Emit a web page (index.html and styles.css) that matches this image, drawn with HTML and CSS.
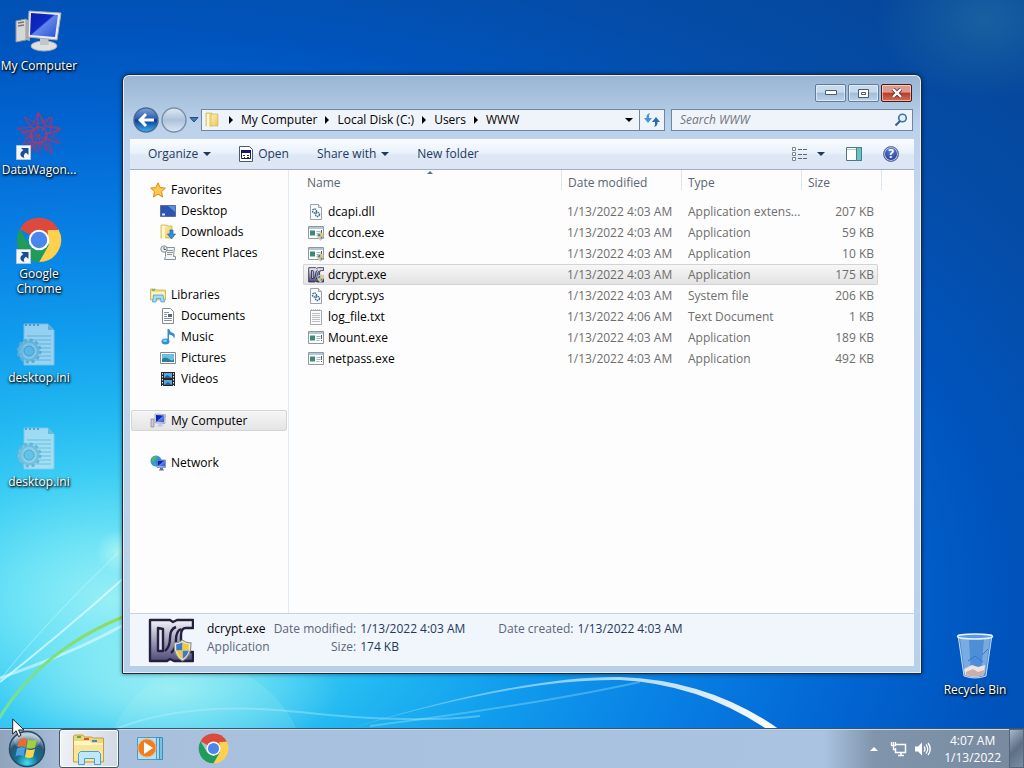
FILE: index.html
```html
<!DOCTYPE html>
<html lang="en">
<head>
    <meta charset="UTF-8">
    <meta name="viewport" content="width=device-width, initial-scale=1.0">
    <title>WWW</title>
    <link rel="stylesheet" href="styles.css">
</head>
<body>
    <!-- Shared icons -->
    <svg class="sprite" aria-hidden="true">
        <defs>
            <linearGradient id="screen" x1="0" y1="0" x2="1" y2="1">
                <stop offset="0" stop-color="#0a1fa8"/>
                <stop offset=".45" stop-color="#1028c4"/>
                <stop offset=".5" stop-color="#5f86ea"/>
                <stop offset="1" stop-color="#2a50d8"/>
            </linearGradient>
            <linearGradient id="dcFill" x1="0" y1="0" x2="0" y2="1">
                <stop offset="0" stop-color="#f4f4fa"/>
                <stop offset="1" stop-color="#4d4a78"/>
            </linearGradient>
            <linearGradient id="folderFill" x1="0" y1="0" x2="1" y2="1">
                <stop offset="0" stop-color="#fdf3b4"/>
                <stop offset="1" stop-color="#e8c55e"/>
            </linearGradient>
            <radialGradient id="orb" cx=".5" cy=".9" r=".8">
                <stop offset="0" stop-color="#3fe0f5"/>
                <stop offset=".4" stop-color="#12708f"/>
                <stop offset=".75" stop-color="#2a5674"/>
                <stop offset="1" stop-color="#a9c0d2"/>
            </radialGradient>
            <linearGradient id="back" x1="0" y1="0" x2="0" y2="1">
                <stop offset="0" stop-color="#7fa3d8"/>
                <stop offset=".45" stop-color="#2a5cb0"/>
                <stop offset=".5" stop-color="#0c3a93"/>
                <stop offset="1" stop-color="#38b4f0"/>
            </linearGradient>
            <linearGradient id="fwd" x1="0" y1="0" x2="0" y2="1">
                <stop offset="0" stop-color="#dfe9f5"/>
                <stop offset=".5" stop-color="#adc2da"/>
                <stop offset="1" stop-color="#dbe8f6"/>
            </linearGradient>
        </defs>
        <symbol id="i-chrome" viewBox="0 0 48 48">
            <path fill="#dc4a3d" d="M24 24 4 12.600A23 23 0 0 1 44 12.500Z"/>
            <path fill="#fdd04d" d="M44 12.500A23 23 0 0 1 24 47L34 29.500 33 13.500Z"/>
            <path fill="#1f9d58" d="M4 12.600 14 30 24 35.500 34 29.500 24 47A23 23 0 0 1 4 12.600Z"/>
            <path fill="#dc4a3d" d="M24 13.500H44.400L40 8Z"/>
            <circle cx="24" cy="24" r="10.800" fill="#fff"/>
            <circle cx="24" cy="24" r="8.600" fill="#4a86ec"/>
        </symbol>
        <symbol id="i-shortcut" viewBox="0 0 15 15">
            <path fill="#f4f7fa" stroke="#b8c4cf" d="M.5.5h14v14H.5z"/>
            <path fill="#1b4f94" d="M5 3h7.500v7L10 7.700C7.800 9 7.300 11 8.500 13 3.500 12 3 7.700 7.300 5.300Z"/>
        </symbol>
        <symbol id="i-ini" viewBox="0 0 48 48">
            <g opacity=".65">
                <path fill="#dcedf5" stroke="#a8cfe2" d="M9 4h24l6 6v35H9z"/>
                <path stroke="#8fbcd4" d="M12 16h24M12 20h24M12 24h24M12 28h24M12 32h24M12 36h24M12 40h24"/>
                <path fill="#8ab9cf" d="M33 4v6h6z"/>
                <path stroke="#6c9ab4" stroke-width="2" stroke-dasharray="2 2" d="M10 5h16"/>
                <circle cx="14" cy="31" r="11" fill="#b5d3e2" fill-opacity=".85" stroke="#7fb0c9" stroke-width="3" stroke-dasharray="3 2.800"/>
                <circle cx="14" cy="31" r="9" fill="none" stroke="#90bdd3" stroke-width="2"/>
                <circle cx="14" cy="31" r="5" fill="#7cc4e3" stroke="#5b9cbf"/>
            </g>
        </symbol>
        <symbol id="i-dc" viewBox="0 0 46 46">
            <path fill="url(#dcFill)" stroke="#24213f" stroke-width="2.400" stroke-linejoin="round" d="M2 2h20l3 2 4-2h16v8H38q-5 0-5 7v17h12v9H26l-4-2-3 2H2V2z"/>
            <path fill="#e3e3f0" stroke="#24213f" stroke-width="2.400" stroke-linejoin="round" d="m10 10 5 1v22h-5z"/>
            <path fill="none" stroke="#24213f" stroke-width="2.400" d="M28 9q-6 2-6 11t-5 13M33 11q-5 2-5 11t-5 13"/>
        </symbol>
        <symbol id="i-shield" viewBox="0 0 18 22">
            <path fill="#e9e6dc" stroke="#8a8a80" d="M9 1q4 3 8 2.500Q18 16 9 21 0 16 1 3.500 5 4 9 1z"/>
            <path fill="#3a79d0" d="M9 3q-3 2-6 2v6h6zM9 11h6q-1 5-6 8z"/>
            <path fill="#f2ca3c" d="M9 3q3 2 6 2v6H9zM9 11H3q1 5 6 8z"/>
        </symbol>
        <symbol id="i-exe" viewBox="0 0 16 16">
            <path fill="#fff" stroke="#8b99a5" d="M.5 1.500h15v12H.5z"/>
            <path fill="#b5c6d6" d="M1 2h14v2H1z"/>
            <path fill="#3b8a72" d="M2 5.500h5v5H2z"/>
            <path stroke="#a9b3bd" d="M8.500 6.500h4M8.500 8.500h4M8.500 10.500h3"/>
            <path stroke="#55606b" d="M13.500 5v4M13.500 10v1"/>
        </symbol>
        <symbol id="i-gears" viewBox="0 0 16 16">
            <path fill="#fbfcfd" stroke="#9aa3ab" d="M2.500.5h8l3 3v12h-11z"/>
            <path fill="#dde3e8" stroke="#9aa3ab" d="M10.500.5v3h3"/>
            <circle cx="6.500" cy="7" r="2" fill="none" stroke="#3d6c98" stroke-width="1.500" stroke-dasharray="1.500 .6"/>
            <circle cx="9.500" cy="10.500" r="2" fill="none" stroke="#3d6c98" stroke-width="1.500" stroke-dasharray="1.500 .6"/>
        </symbol>
        <symbol id="i-text" viewBox="0 0 16 16">
            <path fill="#fbfbfb" stroke="#a5a9ab" d="M2.500 1.500h11v14h-11z"/>
            <path stroke="#8d9396" stroke-dasharray="1 1" d="M3 1h10"/>
            <path stroke="#b9bfc3" d="M4 4.500h8M4 6.500h8M4 8.500h8M4 10.500h8M4 12.500h8"/>
        </symbol>
        <symbol id="i-pc" viewBox="0 0 16 16">
            <path fill="#c9ccd2" stroke="#858a93" stroke-width=".7" d="M1 6h3v8H1z"/>
            <path fill="#dfe2e8" stroke="#9096a3" stroke-width=".7" d="m5 1 10.500.7-.8 9L5 9.800z"/>
            <path fill="url(#screen)" d="m6 2 8.500.5-.6 7L6 8.800z"/>
            <path fill="#c7cad4" d="M9 10.500h3l1 3H7z"/>
        </symbol>
        <symbol id="i-library" viewBox="0 0 16 16">
            <path fill="#f2dc86" stroke="#c9a440" stroke-width=".7" d="M.5 2h5l1 1h9v10H.5z"/>
            <path fill="#fff4bd" d="M1.500 5h13v7h-13z"/>
            <path stroke="#50b860" stroke-width="1.500" d="M2 3h3"/>
            <path fill="#9fdcf5" stroke="#3b94c8" stroke-width=".7" d="M3.500 8h9.500l1.500 7H11l-.5-3.500H6.500L6 15H2.500z"/>
        </symbol>
    </svg>

    <main class="desktop">
        <svg class="wallpaper" viewBox="0 0 1024 768" preserveAspectRatio="none" aria-hidden="true">
            <defs>
                <linearGradient id="swoosh">
                    <stop offset="0" stop-color="#fff" stop-opacity=".15"/>
                    <stop offset=".45" stop-color="#fff" stop-opacity=".5"/>
                    <stop offset="1" stop-color="#fff"/>
                </linearGradient>
                <linearGradient id="stem">
                    <stop offset="0" stop-color="#6fe39a"/>
                    <stop offset="1" stop-color="#8fdc5a"/>
                </linearGradient>
                <radialGradient id="glow">
                    <stop offset="0" stop-color="#c4fbf3" stop-opacity=".6"/>
                    <stop offset="1" stop-color="#c4fbf3" stop-opacity="0"/>
                </radialGradient>
                <radialGradient id="haze">
                    <stop offset="0" stop-color="#2f7fa6" stop-opacity=".45"/>
                    <stop offset="1" stop-color="#2f7fa6" stop-opacity="0"/>
                </radialGradient>
            </defs>
            <ellipse cx="985" cy="20" rx="110" ry="80" fill="url(#haze)"/>
            <ellipse cx="170" cy="690" rx="170" ry="70" fill="url(#glow)"/>
            <ellipse cx="205" cy="790" rx="105" ry="125" fill="#b8fbf0" opacity=".14"/>
            <circle cx="118" cy="552" r="22" fill="url(#glow)"/>
            <path fill="none" stroke="#dffcff" stroke-width="2" opacity=".75" d="M0 682Q60 635 125 577"/>
            <path fill="none" stroke="#dffcff" stroke-width="1" opacity=".45" d="M0 680Q40 628 118 553"/>
            <path fill="none" stroke="#dffcff" stroke-width="3" opacity=".6" d="M0 678Q80 650 125 624"/>
            <path fill="none" stroke="url(#stem)" stroke-width="3" d="M-2 720Q40 650 125 616"/>
            <path fill="none" stroke="#bdf3ff" stroke-width="2" opacity=".35" d="M118 728Q190 700 300 712T480 716"/>
            <path fill="none" stroke="#bdf3ff" stroke-width="2" opacity=".3" d="M370 726Q540 704 640 682"/>
            <path fill="url(#swoosh)" d="M345 730Q520 676 620 677Q710 680 780 730H768Q700 684 620 680Q520 678 345 730z"/>
        </svg>

        <nav class="shortcuts" aria-label="Desktop icons">
            <a class="shortcut" href="#">
                <span class="shortcut-icon">
                    <svg width="48" height="48" viewBox="0 0 48 48">
                        <path fill="#d7d8d6" stroke="#94989c" d="m1 13 10-2v21l-10 2z"/>
                        <path fill="#a6a9ab" d="m11 11 4 2v20l-4-1z"/>
                        <path stroke="#70757b" stroke-width="1.500" d="m3 15 6-1M3 18l6-1"/>
                        <ellipse cx="29" cy="38" rx="13" ry="5" fill="#dfe1e0" stroke="#a6abae"/>
                        <path fill="#c3c7ca" d="M25 29h8l1 8h-9z"/>
                        <path fill="#e8ebee" stroke="#a4abb3" d="m14 3 32 2-4 27-29-3z"/>
                        <path fill="url(#screen)" d="m16 5 27 2-3 22-25-2z"/>
                    </svg>
                </span>
                <span>My Computer</span>
            </a>
            <a class="shortcut" href="#">
                <span class="shortcut-icon">
                    <svg width="48" height="48" viewBox="0 0 48 48">
                        <g fill="none" stroke="#a8356c" stroke-width=".9" transform="translate(24 23)">
                            <g id="burst">
                                <path d="M0-22 8-8 22-6 6 0 8 16 0 8-8 16-6 0-22-6-8-8z"/>
                                <path d="M-14-16 14 16M14-16-14 16" stroke-dasharray="7 3"/>
                            </g>
                            <use href="#burst" transform="rotate(36)"/>
                            <use href="#burst" transform="rotate(72)"/>
                            <circle r="8" stroke="#d6304a"/>
                        </g>
                    </svg>
                    <svg class="arrow-badge" width="15" height="15"><use href="#i-shortcut"/></svg>
                </span>
                <span>DataWagon...</span>
            </a>
            <a class="shortcut" href="#">
                <span class="shortcut-icon">
                    <svg width="46" height="46"><use href="#i-chrome"/></svg>
                    <svg class="arrow-badge" width="15" height="15"><use href="#i-shortcut"/></svg>
                </span>
                <span>Google Chrome</span>
            </a>
            <a class="shortcut" href="#">
                <span class="shortcut-icon"><svg width="48" height="48"><use href="#i-ini"/></svg></span>
                <span>desktop.ini</span>
            </a>
            <a class="shortcut" href="#">
                <span class="shortcut-icon"><svg width="48" height="48"><use href="#i-ini"/></svg></span>
                <span>desktop.ini</span>
            </a>
        </nav>

        <a class="shortcut recycle-bin" href="#">
            <span class="shortcut-icon">
                <svg width="48" height="48" viewBox="0 0 48 48">
                    <path fill="#9cc6ee" fill-opacity=".5" stroke="#c3ddf3" d="M7 3h34l-6 41q-11 4-22 0z"/>
                    <path fill="#fff" opacity=".25" d="m9 6 9 1 2 36-6-1zM33 7h6l-5 34-4 1z"/>
                    <path fill="none" stroke="#2f78cc" d="m17 29 7-5 8 6M31 23l6-6"/>
                    <path fill="#efe2df" d="m13 37 8-4 6 2 7-2-1 10q-10 4-19 0z"/>
                    <path fill="#c8b0ad" d="m15 40 7-3 5 3 6-2v5q-9 3-18 0z"/>
                    <ellipse cx="24" cy="4.500" rx="17.500" ry="2.500" fill="#5f9bdc" stroke="#e5f1fb" stroke-width="1.500"/>
                </svg>
            </span>
            <span>Recycle Bin</span>
        </a>

        <section class="window">
            <header class="titlebar">
                <button class="caption" aria-label="Minimize">
                    <svg width="12" height="6"><path fill="#fff" stroke="#4c5a6b" d="M.5.500h11v4H.5z"/></svg>
                </button>
                <button class="caption" aria-label="Restore">
                    <svg width="11" height="9"><path fill="#fff" stroke="#4c5a6b" d="M.5.500h10v8H.5zM3.500 3.500h4v2h-4z"/></svg>
                </button>
                <button class="caption caption-close" aria-label="Close">
                    <svg width="12" height="10" viewBox="0 0 12 10"><path stroke="#6a3330" stroke-width="4" d="m2 1 8 8M10 1 2 9"/><path stroke="#fff" stroke-width="2.400" d="m2 1 8 8M10 1 2 9"/></svg>
                </button>
            </header>

            <div class="navbar">
                <div class="travel">
                    <button aria-label="Back">
                        <svg width="26" height="26" viewBox="0 0 26 26">
                            <circle cx="13" cy="13" r="12" fill="url(#back)" stroke="#4c6a94" stroke-width="1.500"/>
                            <path fill="#fff" d="M5 13l7-7 2 2-3 3.400h10v3.200H11l3 3.400-2 2z"/>
                        </svg>
                    </button>
                    <button aria-label="Forward">
                        <svg width="26" height="26" viewBox="0 0 26 26">
                            <circle cx="13" cy="13" r="12" fill="url(#fwd)" stroke="#7c91aa" stroke-width="1.500"/>
                        </svg>
                    </button>
                    <button aria-label="Recent pages">
                        <svg width="10" height="6"><path fill="#3f7cb3" stroke="#274e7c" d="M1 .5h8L5 5z"/></svg>
                    </button>
                </div>
                <div class="address">
                    <svg class="address-icon" width="16" height="16" viewBox="0 0 16 16">
                        <path fill="#f6dc7e" stroke="#d1ad49" stroke-width=".6" d="M2 1h6v13H2z"/>
                        <path fill="url(#folderFill)" stroke="#d1ad49" stroke-width=".6" d="m7 3 2-1h5v12H7z"/>
                        <path fill="#fffbe0" d="M3 2h2v13H3z"/>
                    </svg>
                    <span class="sep"></span>
                    <button>My Computer</button>
                    <span class="sep"></span>
                    <button>Local Disk (C:)</button>
                    <span class="sep"></span>
                    <button>Users</button>
                    <span class="sep"></span>
                    <button>WWW</button>
                    <button class="history" aria-label="Previous locations"><span class="down"></span></button>
                    <button class="refresh" aria-label="Refresh">
                        <svg width="16" height="14" viewBox="0 0 16 14">
                            <path fill="#4b94d2" d="M6 0Q2 1 2.500 5H0l4 5 4-5H5Q4.500 2 6 0z"/>
                            <path fill="#2f6cae" d="M10 14q4-1 3.500-5H16l-4-5-4 5h3q.5 3-1 5z"/>
                        </svg>
                    </button>
                </div>
                <form class="search">
                    <input type="text" placeholder="Search WWW" aria-label="Search WWW">
                    <svg width="14" height="14" viewBox="0 0 14 14">
                        <circle cx="8.500" cy="5" r="3.800" fill="#e4f0fb" stroke="#3f6fae" stroke-width="1.600"/>
                        <path stroke="#3a5f96" stroke-width="2.200" d="M6 8 1.500 12.500"/>
                    </svg>
                </form>
            </div>

            <div class="toolbar">
                <button>Organize <span class="down"></span></button>
                <button>
                    <svg width="14" height="16" viewBox="0 0 14 16">
                        <path fill="#fff" stroke="#4d5a68" d="M.5.500h10l3 3v12H.5z"/>
                        <path fill="#fff" stroke="#1a1a50" d="M2.500 4.500h9v8h-9z"/>
                        <path fill="#16166c" d="M2 4h10v3H2z"/>
                        <path stroke="#333" d="M4 9.500h2M8 9.500h2M5 11.500h1M8 11.500h2"/>
                    </svg>
                    Open
                </button>
                <button>Share with <span class="down"></span></button>
                <button>New folder</button>
                <div class="toolbar-right">
                    <button aria-label="Change your view">
                        <svg width="16" height="14" viewBox="0 0 16 14">
                            <path fill="#fff" stroke="#7b8490" d="M.5.500h3v3h-3zM.5 5.500h3v3h-3zM.5 10.500h3v3h-3z"/>
                            <path stroke="#5a6674" stroke-dasharray="4 1" d="M6 2.500h10M6 7.500h10M6 11.500h10"/>
                        </svg>
                        <span class="down"></span>
                    </button>
                    <button aria-label="Preview pane">
                        <svg width="16" height="14" viewBox="0 0 16 14">
                            <path fill="#fff" stroke="#53728a" d="M.5.500h15v13H.5z"/>
                            <path fill="#6fc0c4" stroke="#3a868c" d="M10.500.500h5v13h-5z"/>
                            <path stroke="#b6c4d0" d="M1 2.500h9"/>
                        </svg>
                    </button>
                    <button class="help" aria-label="Help">?</button>
                </div>
            </div>

            <div class="content">
                <nav class="tree" aria-label="Navigation pane">
                    <div class="tree-group">
                        <a href="#">
                            <svg width="16" height="16" viewBox="0 0 16 16"><path fill="#ffc84a" stroke="#d98a1c" d="m8 .8 2.200 4.800 5.200.5-4 3.500 1.300 5.400L8 12.200 3.300 15l1.300-5.400-4-3.500 5.200-.5z"/></svg>
                            Favorites
                        </a>
                        <a class="child" href="#">
                            <svg width="16" height="16" viewBox="0 0 16 16"><path fill="#2a55b4" stroke="#5b6f96" d="M.5 2.500h15v11H.5z"/><path fill="#5b8ee0" d="M8 3h7v6z"/><path stroke="#dfe9fa" stroke-width="2" d="M2 11.500h3"/></svg>
                            Desktop
                        </a>
                        <a class="child" href="#">
                            <svg width="16" height="16" viewBox="0 0 16 16"><path fill="url(#folderFill)" stroke="#cda944" stroke-width=".7" d="M1 1h6l1 1h4v12H1z"/><path fill="#fff7cb" d="M2 2h3v13H2z"/><path fill="#2f93d8" stroke="#1b6aa8" stroke-width=".7" d="M10 6h3v4h2.500l-4 5-4-5H10z"/></svg>
                            Downloads
                        </a>
                        <a class="child" href="#">
                            <svg width="16" height="16" viewBox="0 0 16 16"><path fill="#f2f3f5" stroke="#8b9199" d="M5.500 2.500h9l-1 9h2v3h-11l1-3z"/><path stroke="#8b9199" d="M7 5.500h6M7 7.500h6M7 9.500h5"/><circle cx="4" cy="4" r="3.200" fill="#e7edf2" stroke="#858c95"/><path fill="none" stroke="#5d656e" d="M4 2v2.500h2"/></svg>
                            Recent Places
                        </a>
                    </div>
                    <div class="tree-group">
                        <a href="#"><svg width="16" height="16"><use href="#i-library"/></svg>Libraries</a>
                        <a class="child" href="#">
                            <svg width="16" height="16" viewBox="0 0 16 16"><path fill="#fff" stroke="#858b91" d="M2.500.5h8l3 3v12h-11z"/><path stroke="#8a9198" d="M4 4.500h5M4 6.500h3M4 8.500h3M4 10.500h8M4 12.500h8"/><path fill="#54687c" d="M8 6h4v3H8z"/></svg>
                            Documents
                        </a>
                        <a class="child" href="#">
                            <svg width="16" height="16" viewBox="0 0 16 16"><path fill="#2f8fd2" d="M7.500 0h1.500q1 3 4 4t1 6q0-4-5-4.500V13H7.500z"/><ellipse cx="5.500" cy="12.500" rx="4" ry="3" fill="#2f8fd2"/><ellipse cx="5" cy="11.800" rx="2" ry="1.200" fill="#8dcdf2"/></svg>
                            Music
                        </a>
                        <a class="child" href="#">
                            <svg width="16" height="16" viewBox="0 0 16 16"><path fill="#fff" stroke="#7f8b96" d="M.5 2.500h15v11H.5z"/><path fill="#6ebce8" d="M2 4h12v8H2z"/><path fill="#2d7d8d" d="M2 9q4-3 7 0t5 0v3H2z"/></svg>
                            Pictures
                        </a>
                        <a class="child" href="#">
                            <svg width="16" height="16" viewBox="0 0 16 16"><path fill="#23272c" d="M1 1h14v14H1z"/><path fill="#5aa5dc" d="M4 2h8v5H4zM4 9h8v5H4z"/><path fill="#2a5f8a" d="m4 7 3-3 5 3zM4 14l4-3 4 3z"/><path stroke="#e9edf0" stroke-dasharray="1.500 1.500" d="M2.500 2v13M13.500 2v13"/></svg>
                            Videos
                        </a>
                    </div>
                    <div class="tree-group">
                        <a class="current" href="#"><svg width="16" height="16"><use href="#i-pc"/></svg>My Computer</a>
                    </div>
                    <div class="tree-group">
                        <a href="#">
                            <svg width="16" height="16" viewBox="0 0 16 16"><circle cx="6" cy="6" r="5.500" fill="#2f9bd0"/><path fill="#54b860" d="M2 3q3-3 5-2L5 5 2 7zM4 8l3 1-1 2z"/><path fill="#dfe6f2" stroke="#4a5a94" stroke-width=".6" d="M7 5h8.500v7.500H7z"/><path fill="url(#screen)" d="M7.500 5.500h7.500v6H7.500z"/><path fill="#69738c" d="M10 13h3v1.500h1v1H9v-1h1z"/></svg>
                            Network
                        </a>
                    </div>
                </nav>

                <div class="files">
                    <table>
                        <colgroup>
                            <col class="col-name">
                            <col class="col-date">
                            <col class="col-type">
                            <col class="col-size">
                        </colgroup>
                        <thead>
                            <tr><th class="sorted">Name</th><th>Date modified</th><th>Type</th><th>Size</th></tr>
                        </thead>
                        <tbody>
                            <tr>
                                <td><svg width="16" height="16"><use href="#i-gears"/></svg>dcapi.dll</td>
                                <td>1/13/2022 4:03 AM</td><td>Application extens...</td><td>207 KB</td>
                            </tr>
                            <tr>
                                <td><svg width="16" height="16"><use href="#i-exe"/><use href="#i-shield" x="9" y="7" width="7" height="9"/></svg>dccon.exe</td>
                                <td>1/13/2022 4:03 AM</td><td>Application</td><td>59 KB</td>
                            </tr>
                            <tr>
                                <td><svg width="16" height="16"><use href="#i-exe"/><use href="#i-shield" x="9" y="7" width="7" height="9"/></svg>dcinst.exe</td>
                                <td>1/13/2022 4:03 AM</td><td>Application</td><td>10 KB</td>
                            </tr>
                            <tr class="selected">
                                <td><svg width="16" height="16"><use href="#i-dc" width="16" height="16"/><use href="#i-shield" x="9" y="7" width="7" height="9"/></svg>dcrypt.exe</td>
                                <td>1/13/2022 4:03 AM</td><td>Application</td><td>175 KB</td>
                            </tr>
                            <tr>
                                <td><svg width="16" height="16"><use href="#i-gears"/></svg>dcrypt.sys</td>
                                <td>1/13/2022 4:03 AM</td><td>System file</td><td>206 KB</td>
                            </tr>
                            <tr>
                                <td><svg width="16" height="16"><use href="#i-text"/></svg>log_file.txt</td>
                                <td>1/13/2022 4:06 AM</td><td>Text Document</td><td>1 KB</td>
                            </tr>
                            <tr>
                                <td><svg width="16" height="16"><use href="#i-exe"/></svg>Mount.exe</td>
                                <td>1/13/2022 4:03 AM</td><td>Application</td><td>189 KB</td>
                            </tr>
                            <tr>
                                <td><svg width="16" height="16"><use href="#i-exe"/></svg>netpass.exe</td>
                                <td>1/13/2022 4:03 AM</td><td>Application</td><td>492 KB</td>
                            </tr>
                        </tbody>
                    </table>
                </div>
            </div>

            <footer class="details">
                <svg width="46" height="46" viewBox="0 0 46 46"><use href="#i-dc"/><use href="#i-shield" x="25" y="21" width="19" height="23"/></svg>
                <div class="details-grid">
                    <strong>dcrypt.exe</strong>
                    <span class="label">Date modified:</span>
                    <span>1/13/2022 4:03 AM</span>
                    <span class="label created">Date created:</span>
                    <span>1/13/2022 4:03 AM</span>
                    <span class="kind">Application</span>
                    <span class="label">Size:</span>
                    <span>174 KB</span>
                </div>
            </footer>
        </section>
    </main>

    <footer class="taskbar">
        <button class="start" aria-label="Start">
            <svg width="38" height="38" viewBox="0 0 38 38">
                <circle cx="19" cy="19" r="17.500" fill="url(#orb)" stroke="#274a66" stroke-width="1.500"/>
                <ellipse cx="19" cy="11" rx="13" ry="8" fill="#fff" opacity=".22"/>
                <path fill="#ee6a2c" d="M11 10q4-3 8-1l-1.500 8q-4-2-8 0z"/>
                <path fill="#a4cf3d" d="M20 9.500q4 2 9 0l-2 8q-4 2-8.500 0z"/>
                <path fill="#4aa0e0" d="M9 18.500q4-2 8 0l-1.500 8q-4-2.500-8 0z"/>
                <path fill="#fbd34a" d="M18.500 19q4 2 8.500 0l-2 8q-4 2-8 0z"/>
            </svg>
        </button>
        <button class="task active" aria-label="Windows Explorer">
            <svg width="34" height="32" viewBox="0 0 34 32">
                <path fill="#f0d574" stroke="#c3a142" d="M1.500 4q0-2 2-2h7q1 0 2 2h7l2 1h10v24h-30z"/>
                <path fill="#58ad4e" d="M5 3h4v2H5z"/>
                <path fill="#d35638" d="M12 5h5v2h-5z"/>
                <path fill="#4a86d0" d="M20 7h5v2h-5z"/>
                <path fill="#fff6c5" d="M2 8h16l2 2h11v3H2z"/>
                <path fill="#f9e597" d="M2 12h29v16H2z"/>
                <path fill="#bce8fa" stroke="#4ba0cf" d="M8.500 18.500h18l2 2v11h-6v-6h-10v6h-6v-11z"/>
            </svg>
        </button>
        <button class="task" aria-label="Windows Media Player">
            <svg width="30" height="28" viewBox="0 0 30 28">
                <path fill="#7fc0df" stroke="#3a8fb8" d="M8.500 2.500h18v22h-18z"/>
                <path fill="#a9d8ee" stroke="#3a8fb8" d="M5.500 2.500h18v22h-18z"/>
                <path fill="#b5dff2" stroke="#4a9cc4" d="M1.500 2.500h19v22h-19z"/>
                <circle cx="11" cy="13" r="9" fill="#ef7d22" stroke="#f9b06d"/>
                <path fill="#fff" d="m8 7 9 6-9 6z"/>
            </svg>
        </button>
        <button class="task" aria-label="Google Chrome"><svg width="31" height="31"><use href="#i-chrome"/></svg></button>

        <div class="tray">
            <button aria-label="Show hidden icons"><svg width="8" height="4"><path fill="#fff" d="M0 4 4 0l4 4z"/></svg></button>
            <button aria-label="Network">
                <svg width="17" height="16" viewBox="0 0 17 16">
                    <path fill="none" stroke="#fff" stroke-width="1.500" d="M6 3.500h9.500v8H5.500V7M8 14.500h6M11 12v2"/>
                    <path fill="none" stroke="#fff" stroke-width="1.300" d="M1.500 1v3.500h4V1M3.500 1v7.500h2"/>
                </svg>
            </button>
            <button aria-label="Volume">
                <svg width="16" height="14" viewBox="0 0 16 14">
                    <path fill="#fff" d="M0 4.500h3L7 .5v13L3 9.500H0z"/>
                    <path fill="none" stroke="#fff" stroke-width="1.300" d="M9 4.500q2 2.500 0 5M11 2.500q3.500 4.500 0 9M13 1q4.500 6 0 12"/>
                </svg>
            </button>
            <time class="clock">4:07 AM<br>1/13/2022</time>
        </div>
        <button class="show-desktop" aria-label="Show desktop"></button>
    </footer>

    <svg class="cursor" width="13" height="20" viewBox="0 0 13 20" aria-hidden="true">
        <path fill="#fff" stroke="#222" d="M.7 1v15l3.400-3.200L6.500 18.500l2.500-1-2.400-5.500H12z"/>
    </svg>
</body>
</html>
```

FILE: styles.css
```css
* {
    box-sizing: border-box;
}

body {
    margin: 0;
    height: 100vh;
    display: flex;
    flex-direction: column;
    overflow: hidden;
    font-family: "Open Sans", "Noto Sans", sans-serif;
    font-size: 12px;
    line-height: 18px;
    color: #000;
    background: radial-gradient(ellipse 92% 78% at 11% 78%, #98eff6 0%, #6ee3f6 10%, #3ccdf4 21%, #22b8f1 31%, #109ced 45%, #0880e4 61%, #0265d2 79%, #0054bd 94%, #044da9 110%, #05479c 130%);
}

button {
    display: flex;
    align-items: center;
    gap: 5px;
    padding: 0;
    border: 0;
    background: none;
    font: inherit;
    color: inherit;
    white-space: nowrap;
}

a {
    color: inherit;
    text-decoration: none;
}

svg {
    flex: none;
}

.sprite {
    position: absolute;
    width: 0;
    height: 0;
}

.down {
    border: 4px solid transparent;
    border-top-color: currentColor;
    border-bottom: 0;
}

/* Desktop */
.desktop {
    flex: 1;
    position: relative;
    min-height: 0;
}

.wallpaper {
    position: absolute;
    top: 0;
    left: 0;
    width: 100vw;
    height: 100vh;
}

.shortcuts {
    position: relative;
    width: 78px;
}

.shortcut {
    display: flex;
    flex-direction: column;
    align-items: center;
    gap: 2px;
    width: 78px;
    height: 104px;
    padding-top: 8px;
    color: #fff;
    line-height: 15px;
    text-align: center;
    text-shadow: 1px 1px 2px #000, 0 1px 3px #000;
}

.shortcut-icon {
    position: relative;
    display: flex;
    justify-content: center;
    align-items: center;
    width: 48px;
    height: 48px;
}

.arrow-badge {
    position: absolute;
    left: 1px;
    bottom: 0;
}

.recycle-bin {
    position: absolute;
    right: 10px;
    bottom: 0;
}

.cursor {
    position: absolute;
    left: 12px;
    bottom: 30px;
}

/* Explorer window */
.window {
    position: absolute;
    inset: 74px 102px 54px 122px;
    display: flex;
    flex-direction: column;
    padding: 0 7px 7px;
    border: 1px solid #1c2a3c;
    border-radius: 7px 7px 1px 1px;
    background: linear-gradient(#98b5d3, #bcd2ea 50px, #c3d5ef 120px, #b7d0e8);
    box-shadow: inset 0 0 0 1px #e3eefa, 0 0 4px rgba(0, 0, 0, 0.5);
}

.titlebar {
    display: flex;
    justify-content: flex-end;
    gap: 2px;
    height: 34px;
    padding: 9px 2px 0;
}

.caption {
    justify-content: center;
    width: 31px;
    height: 18px;
    border: 1px solid #5f7d9f;
    border-radius: 2px;
    background: linear-gradient(#c8dbee 45%, #a3bdd8 50%, #b9d3ec);
    box-shadow: inset 0 0 0 1px rgba(255, 255, 255, 0.5);
}

.caption-close {
    border-color: #4e1714;
    background: linear-gradient(#dd9c90 45%, #b93a26 50%, #d2705a);
}

.navbar {
    display: flex;
    gap: 6px;
    height: 30px;
    padding: 0 1px 8px 3px;
}

.travel {
    display: flex;
    align-items: center;
    gap: 2px;
    width: 62px;
}

.address,
.search {
    display: flex;
    align-items: center;
    height: 22px;
    border: 1px solid #6d87a3;
    background: #eff4fb;
}

.address {
    flex: 1;
}

.address-icon {
    margin: 0 9px 0 2px;
}

.sep {
    margin: 0 8px 0 0;
    border: 4px solid transparent;
    border-left-color: #000;
    border-right: 0;
}

.sep ~ .sep {
    margin-left: 8px;
}

.history {
    margin: 0 6px 0 auto;
}

.refresh {
    justify-content: center;
    width: 25px;
    height: 20px;
    border-left: 1px solid #6d87a3;
}

.search {
    width: 242px;
    padding: 0 4px 0 8px;
}

.search input {
    flex: 1;
    min-width: 0;
    padding: 0;
    border: 0;
    outline: 0;
    background: none;
    font: inherit;
}

.search input::placeholder {
    color: #6f757c;
    font-style: italic;
}

.toolbar {
    display: flex;
    align-items: center;
    gap: 28px;
    height: 31px;
    padding: 0 15px 0 18px;
    border-bottom: 1px solid #a0afc3;
    background: linear-gradient(#fafdff, #e9f1fb 45%, #dde7f5 55%, #dce6f4);
    color: #1e395b;
}

.toolbar-right {
    display: flex;
    align-items: center;
    gap: 21px;
    margin-left: auto;
}

.toolbar-right button:first-child {
    gap: 9px;
}

.help {
    justify-content: center;
    width: 16px;
    height: 16px;
    border: 1px solid #5d6f9c;
    border-radius: 50%;
    background: radial-gradient(circle at 50% 30%, #5c7fd6, #152c8a);
    box-shadow: inset 0 0 0 1px #b9c6e4;
    color: #fff;
    font-weight: 700;
}

.content {
    flex: 1;
    display: flex;
    min-height: 0;
    background: #fdfdfd;
}

.tree {
    display: flex;
    flex-direction: column;
    gap: 21px;
    width: 159px;
    padding: 9px 1px 0;
    border-right: 1px solid #e1e9f3;
}

.tree a {
    display: flex;
    align-items: center;
    gap: 5px;
    height: 21px;
    padding-left: 19px;
}

.tree a.child {
    padding-left: 29px;
}

.tree a.current {
    padding-left: 18px;
    border: 1px solid #d5d5d5;
    border-radius: 2px;
    background: linear-gradient(#f6f6f6, #e4e4e4);
}

.files {
    flex: 1;
    padding-left: 14px;
}

.files table {
    table-layout: fixed;
    width: 575px;
    border-spacing: 0;
}

.col-name {
    width: 259px;
}

.col-date,
.col-type {
    width: 120px;
}

.files th {
    position: relative;
    height: 31px;
    padding: 0 6px 5px;
    color: #5a6472;
    font-weight: 400;
    text-align: left;
}

.files th:first-child {
    padding-left: 4px;
}

.files th::after {
    content: "";
    position: absolute;
    top: 0;
    right: 0;
    width: 1px;
    height: 20px;
    background: #dde6f0;
}

.files th:last-child::after {
    right: -4px;
}

.files th.sorted::before {
    content: "";
    position: absolute;
    top: 1px;
    left: 48%;
    border: 3px solid transparent;
    border-top: 0;
    border-bottom-color: #5d7288;
}

.files td {
    height: 21px;
    padding: 0 5px;
    overflow: hidden;
    color: #6d6d6d;
    white-space: nowrap;
}

.files td:nth-child(3) {
    padding-left: 6px;
}

.files td:first-child {
    color: #000;
}

.files td:last-child {
    padding-right: 4px;
    text-align: right;
}

.files td svg {
    margin-right: 4px;
    vertical-align: -4px;
}

.files .selected td {
    border: solid #d3d3d3;
    border-width: 1px 0;
    background: linear-gradient(#f7f7f7, #e3e3e3);
    line-height: 17px;
}

.files .selected td:first-child {
    padding-left: 4px;
    border-left-width: 1px;
    border-radius: 2px 0 0 2px;
}

.files .selected td:last-child {
    padding-right: 3px;
    border-right-width: 1px;
    border-radius: 0 2px 2px 0;
}

.details {
    display: flex;
    align-items: flex-start;
    gap: 13px;
    height: 53px;
    padding: 4px 18px;
    border-top: 1px solid #c9d2e0;
    background: #f1f5fc;
    color: #1e395b;
}

.details-grid {
    display: grid;
    grid-template-columns: repeat(5, auto);
    column-gap: 4px;
    padding-top: 2px;
}

.details strong {
    color: #000;
    font-weight: 400;
}

.details .label {
    color: #5a6779;
    text-align: right;
}

.details .kind {
    color: #5a6779;
}

.details .created {
    padding-left: 29px;
}

/* Taskbar */
.taskbar {
    position: relative;
    display: flex;
    height: 40px;
    border-top: 1px solid #3c566e;
    background: linear-gradient(90deg, #8fa3bb, #a9c0dc 70px, #a7c1de 400px, #a9c3e0 calc(100% - 200px), #8095ac calc(100% - 150px), #77899f);
    box-shadow: inset 0 1px 0 #c6d7e8;
}

.start {
    justify-content: center;
    width: 54px;
    margin-right: 5px;
}

.task {
    justify-content: center;
    width: 60px;
    margin-right: 2px;
}

.task.active {
    border: 1px solid #43566b;
    border-radius: 3px;
    background: linear-gradient(100deg, #f0f3f7, #cfd8e4);
    box-shadow: inset 0 0 0 1px #fff;
}

.tray {
    display: flex;
    align-items: center;
    gap: 12px;
    margin-left: auto;
    padding-right: 8px;
    color: #fff;
}

.tray button + button {
    margin-right: -4px;
}

.clock {
    margin-left: 5px;
    line-height: 17px;
    text-align: center;
}

.show-desktop {
    width: 15px;
    border: 1px solid #55677b;
    background: linear-gradient(135deg, #a8b6c6, #5d7085 50%, #7b8da1);
}
```
